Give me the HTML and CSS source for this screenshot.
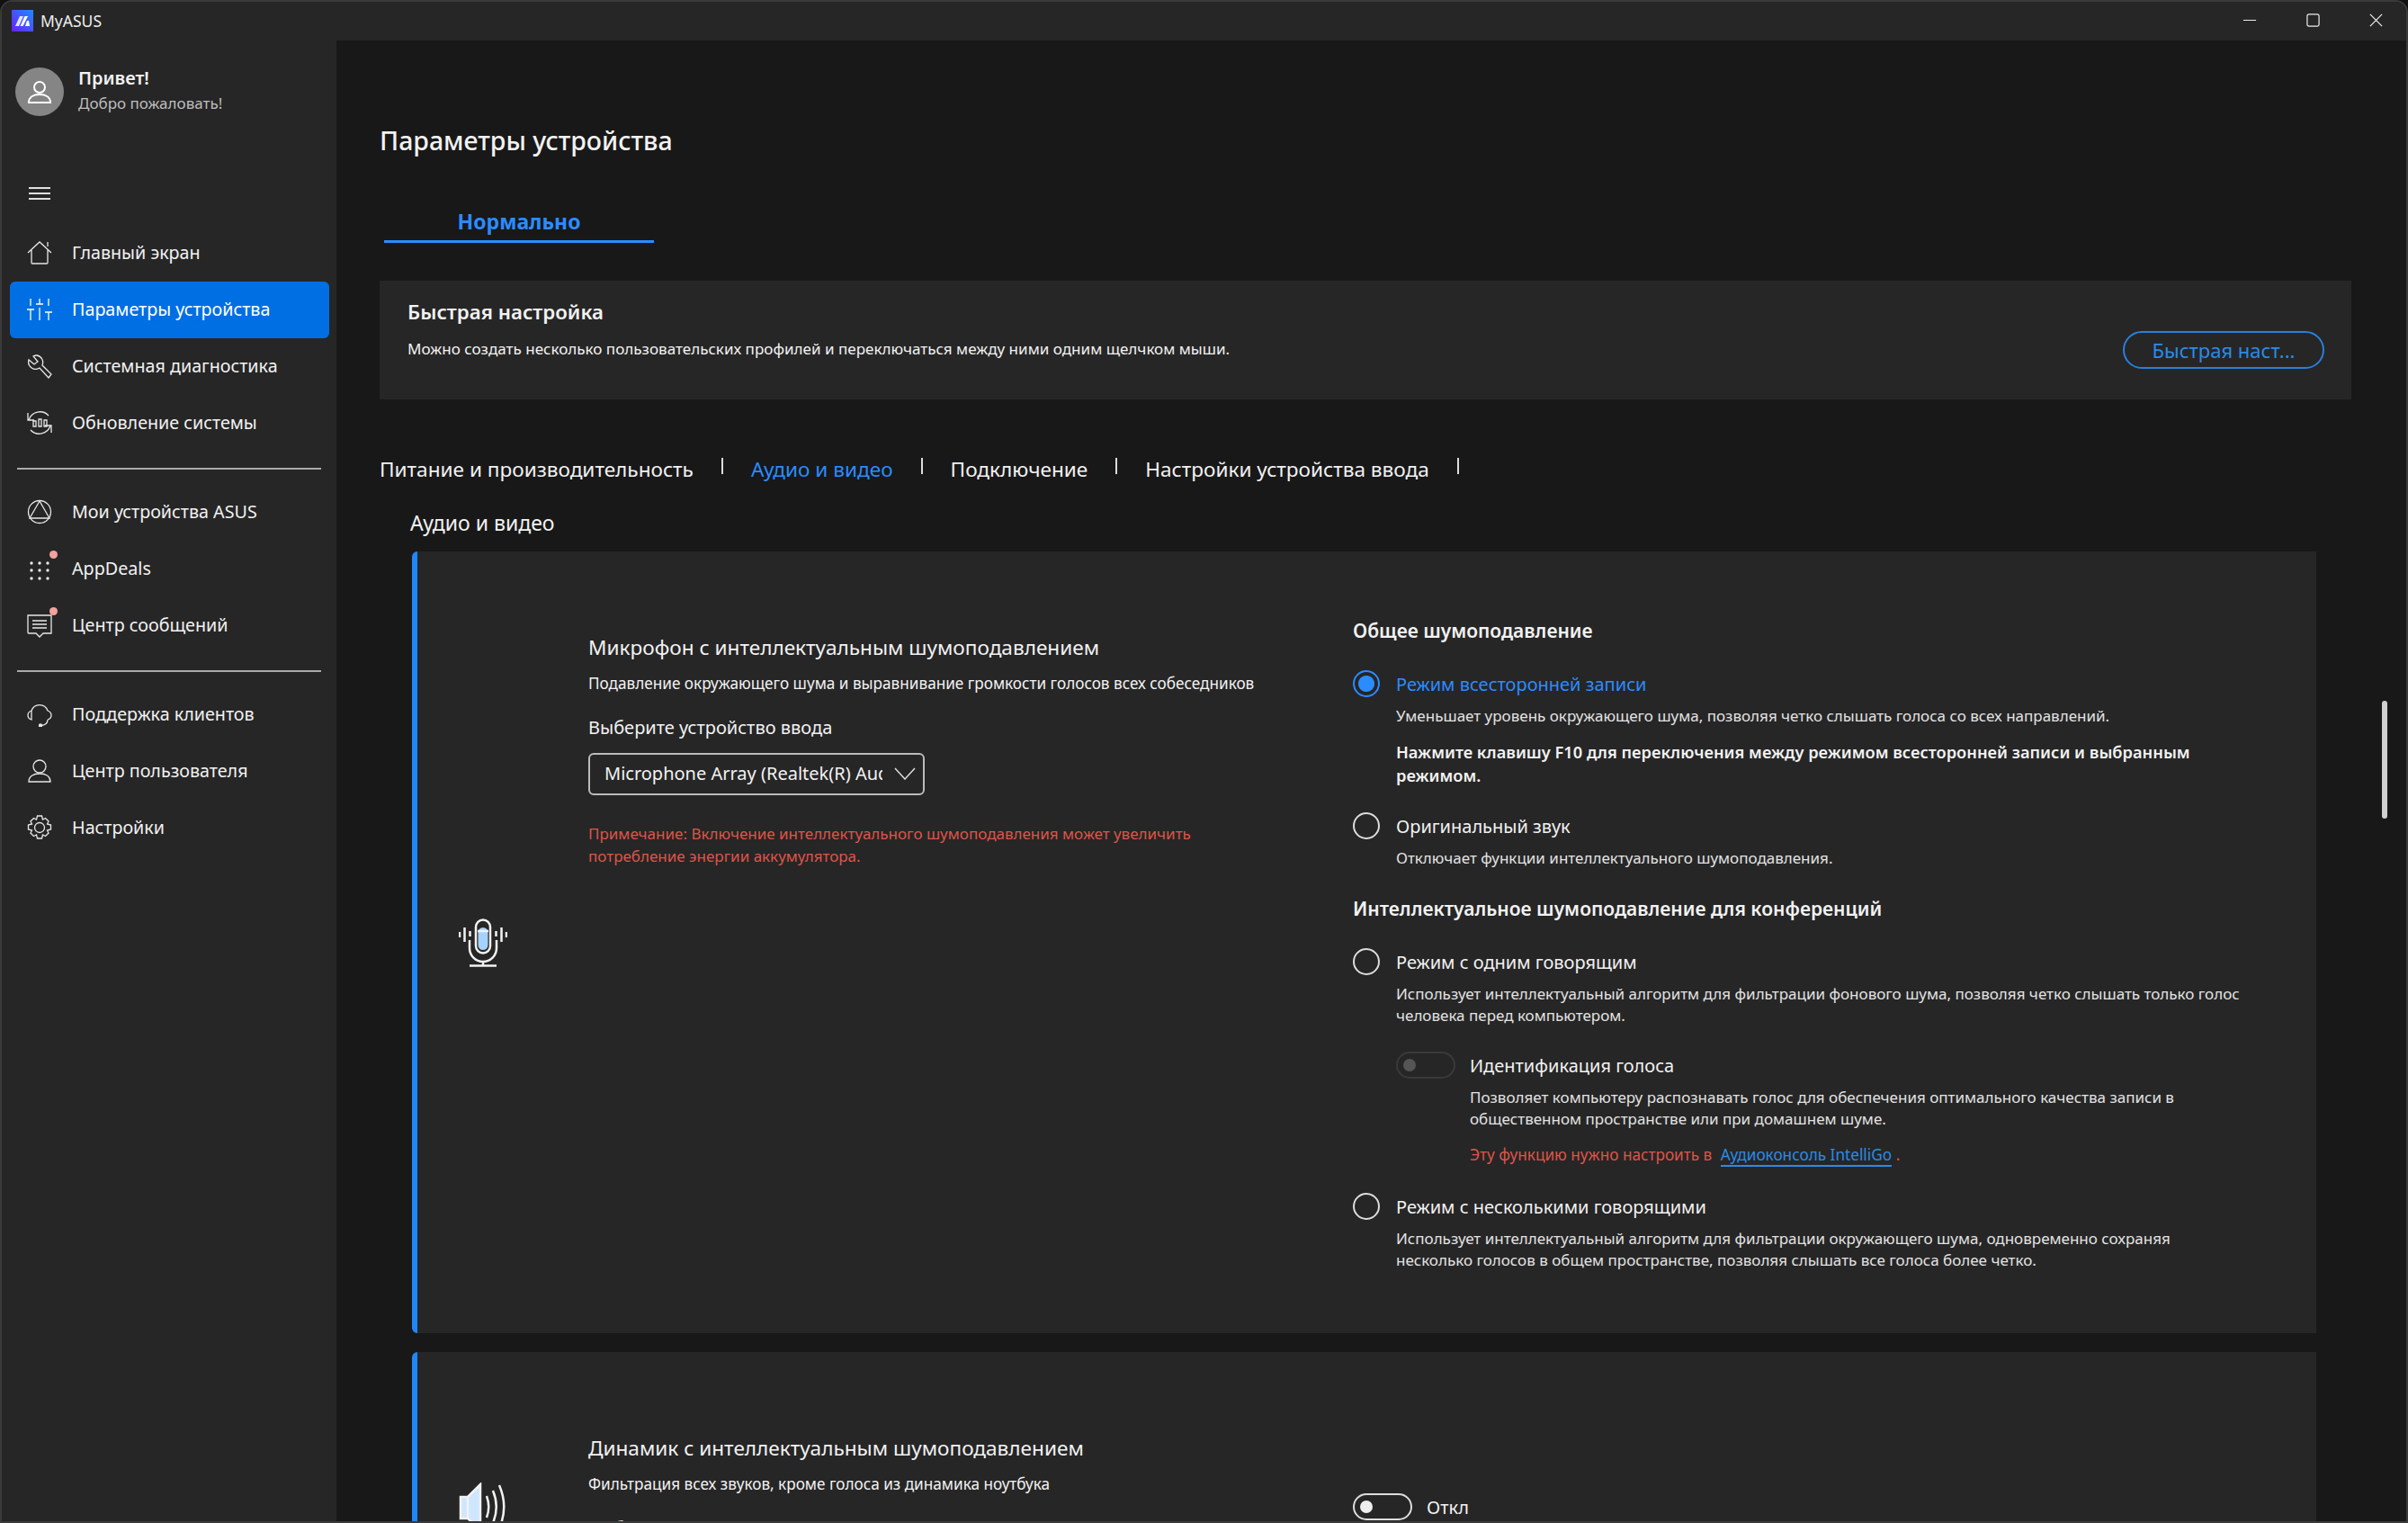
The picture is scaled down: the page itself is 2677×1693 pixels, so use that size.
FILE: index.html
```html
<!DOCTYPE html>
<html lang="ru">
<head>
  <meta charset="UTF-8" />
  <meta name="viewport" content="width=device-width, initial-scale=1" />
  <title>MyASUS</title>
  <link rel="stylesheet" href="styles.css">
</head>
<body>
<div class="ventana">

  <!-- Barra de titulo -->
  <header class="titlebar">
    <svg class="logo" viewBox="0 0 24 24">
      <defs>
        <linearGradient id="logoGrad" x1="0" y1="1" x2="1" y2="0">
          <stop offset="0" stop-color="#6a1fff" />
          <stop offset="1" stop-color="#1e8cff" />
        </linearGradient>
      </defs>
      <rect width="24" height="24" fill="url(#logoGrad)" />
      <polygon points="4,18 8,18 13,7 9,7" fill="#dfe6ff" />
      <polygon points="9.5,18 12.5,18 18,7 14.5,7" fill="#fff" />
      <polygon points="17,12 19,12 20,18 15,18" fill="#fff" />
    </svg>
    <span class="app-name">MyASUS</span>
    <div class="win-btns">
      <svg viewBox="0 0 16 16"><path d="M0 8H15" /></svg>
      <svg viewBox="0 0 16 16"><rect x="1" y="1" width="14" height="14" rx="2" /></svg>
      <svg viewBox="0 0 16 16"><path d="M1 1L15 15M15 1L1 15" /></svg>
    </div>
  </header>

  <div class="cuerpo">

    <!-- Columna izquierda -->
    <aside class="sidebar">
      <div class="perfil">
        <div class="avatar">
          <svg viewBox="0 0 28 28"><circle cx="14" cy="9" r="6" /><path d="M2 26c0-6 5-9 12-9s12 3 12 9z" /></svg>
        </div>
        <div class="saludo">
          <div class="hola">Привет!</div>
          <div class="bienvenida">Добро пожаловать!</div>
        </div>
      </div>

      <div class="hamburguesa"><span></span><span></span><span></span></div>

      <nav>
        <a class="item">
          <svg viewBox="0 0 28 28"><path d="M1 14L14 2L27 14M5 11V25a1 1 0 0 0 1 1H22a1 1 0 0 0 1-1V11M23 7V2" /></svg>
          <span>Главный экран</span>
        </a>
        <a class="item activo">
          <svg viewBox="0 0 28 28"><path d="M4 2V10M14 2V8M10 8H18M24 2V10M4 14V26M0 14H8M14 12V26M24 17V26M20 17H28" /></svg>
          <span>Параметры устройства</span>
        </a>
        <a class="item">
          <svg viewBox="0 0 28 28"><path d="M11 2a8 8 0 0 1 6 11L27 23L24 27L14 16A8 8 0 0 1 2 7L8 12L12 9L7 3a8 8 0 0 1 4-1z" /></svg>
          <span>Системная диагностика</span>
        </a>
        <a class="item">
          <svg viewBox="0 0 28 28"><path d="M2 11A13 13 0 0 1 24 6M26 17A13 13 0 0 1 4 22M1 3V11H8M27 25V17H20M7 12h3v6H7zM13 10h3v8h-3zM19 11h3v7h-3z" /></svg>
          <span>Обновление системы</span>
        </a>
        <hr>
        <a class="item">
          <svg viewBox="0 0 28 28"><circle cx="14" cy="14" r="12.5" /><path d="M14 2L3 21H25z" /></svg>
          <span>Мои устройства ASUS</span>
        </a>
        <a class="item">
          <svg class="relleno" viewBox="0 0 28 28"><circle cx="5" cy="8" r="1.7" /><circle cx="14" cy="8" r="1.7" /><circle cx="23" cy="8" r="1.7" /><circle cx="5" cy="16" r="1.7" /><circle cx="14" cy="16" r="1.7" /><circle cx="23" cy="16" r="1.7" /><circle cx="5" cy="25" r="1.7" /><circle cx="14" cy="25" r="1.7" /><circle cx="23" cy="25" r="1.7" /></svg>
          <i class="punto"></i>
          <span>AppDeals</span>
        </a>
        <a class="item">
          <svg viewBox="0 0 28 28"><path d="M1 3H27V23H18L14 27L10 23H2a1 1 0 0 1-1-1zM6 9H22M6 13H22M6 17H22" /></svg>
          <i class="punto"></i>
          <span>Центр сообщений</span>
        </a>
        <hr>
        <a class="item">
          <svg viewBox="0 0 28 28"><path d="M5 10a9.500 9.500 0 0 1 18 0M5 10C2 11 1 13 1 15s1 4 4 5zM23 10c3 1 4 3 4 5s-1 4-4 5M23 20c0 4-3 6-7 6.500" /><circle class="lleno" cx="15" cy="26.500" r="1.500" /></svg>
          <span>Поддержка клиентов</span>
        </a>
        <a class="item">
          <svg viewBox="0 0 28 28"><circle cx="14" cy="9" r="7" /><path d="M2 26c0-6 5-9 12-9s12 3 12 9z" /></svg>
          <span>Центр пользователя</span>
        </a>
        <a class="item">
          <svg viewBox="0 0 28 28"><circle cx="14" cy="14" r="5.500" /><path d="M11.500 1h5l1 4 3-1.500 3.500 3.500-1.500 3 4 1v5l-4 1 1.500 3-3.500 3.500-3-1.500-1 4h-5l-1-4-3 1.500-3.500-3.500 1.500-3-4-1v-5l4-1-1.500-3 3.500-3.500 3 1.500z" /></svg>
          <span>Настройки</span>
        </a>
      </nav>
    </aside>

    <!-- Contenido -->
    <main class="contenido">
      <h1>Параметры устройства</h1>

      <div class="modo">Нормально</div>

      <section class="rapida">
        <div>
          <h3>Быстрая настройка</h3>
          <p>Можно создать несколько пользовательских профилей и переключаться между ними одним щелчком мыши.</p>
        </div>
        <button class="btn-rapida">Быстрая наст...</button>
      </section>

      <div class="categorias">
        <span>Питание и производительность</span><b></b>
        <span class="sel">Аудио и видео</span><b></b>
        <span>Подключение</span><b></b>
        <span>Настройки устройства ввода</span><b></b>
      </div>

      <h2>Аудио и видео</h2>

      <section class="tarjeta">
        <div class="col-icono">
          <svg viewBox="0 0 54 54">
            <rect x="21.500" y="10" width="11" height="25" rx="5.500" fill="#a6d2ff" stroke="none" />
            <rect x="19" y="1.500" width="16" height="37" rx="8" />
            <path d="M21 14H33M12 24V33a15 15 0 0 0 30 0V24M27 48V52M12 52.500H42M1 15V21M6.500 10V26M12.500 14V20M41.500 14V20M47.500 10V26M53 15V21" />
          </svg>
        </div>
        <div class="col-izq">
          <h4>Микрофон с интеллектуальным шумоподавлением</h4>
          <p class="sub">Подавление окружающего шума и выравнивание громкости голосов всех собеседников</p>
          <div class="etiqueta">Выберите устройство ввода</div>
          <div class="select">
            <span>Microphone Array (Realtek(R) Audio)</span>
            <svg viewBox="0 0 24 14"><path d="M1 1L12 13L23 1" /></svg>
          </div>
          <p class="nota">Примечание: Включение интеллектуального шумоподавления может увеличить<br>потребление энергии аккумулятора.</p>
        </div>
        <div class="col-der">
          <h5>Общее шумоподавление</h5>
          <div class="opcion sel m29"><i class="radio marcado"></i>Режим всесторонней записи</div>
          <p class="desc">Уменьшает уровень окружающего шума, позволяя четко слышать голоса со всех направлений.</p>
          <p class="aviso">Нажмите клавишу F10 для переключения между режимом всесторонней записи и выбранным<br>режимом.</p>
          <div class="opcion m28"><i class="radio"></i>Оригинальный звук</div>
          <p class="desc">Отключает функции интеллектуального шумоподавления.</p>
          <h5 class="m29">Интеллектуальное шумоподавление для конференций</h5>
          <div class="opcion m29"><i class="radio"></i>Режим с одним говорящим</div>
          <p class="desc">Использует интеллектуальный алгоритм для фильтрации фонового шума, позволяя четко слышать только голос<br>человека перед компьютером.</p>
          <div class="voz">
            <div class="opcion-voz"><i class="toggle off"></i>Идентификация голоса</div>
            <p class="desc">Позволяет компьютеру распознавать голос для обеспечения оптимального качества записи в<br>общественном пространстве или при домашнем шуме.</p>
            <p class="aviso-rojo">Эту функцию нужно настроить в <a>Аудиоконсоль IntelliGo</a> <em>.</em></p>
          </div>
          <div class="opcion m30"><i class="radio"></i>Режим с несколькими говорящими</div>
          <p class="desc">Использует интеллектуальный алгоритм для фильтрации окружающего шума, одновременно сохраняя<br>несколько голосов в общем пространстве, позволяя слышать все голоса более четко.</p>
        </div>
      </section>

      <section class="tarjeta segunda">
        <div class="col-icono">
          <svg viewBox="0 0 54 54">
            <path d="M24 2V52L10 40H2V16H10z" fill="#cfe6ff" stroke="none" />
            <path d="M24 2V52L10 40H2V16H10zM10 16V40M31 15c3 8 3 16 0 24M38 9c5 12 5 24 0 36M45 3c7 16 7 32 0 48" />
          </svg>
        </div>
        <div class="col-izq">
          <h4>Динамик с интеллектуальным шумоподавлением</h4>
          <p class="sub">Фильтрация всех звуков, кроме голоса из динамика ноутбука</p>
          <div class="etiqueta">Выберите устройство вывода</div>
        </div>
        <div class="col-der abajo">
          <div class="opcion"><i class="toggle"></i>Откл</div>
        </div>
      </section>
    </main>

    <div class="scroll"></div>
  </div>
</div>
</body>
</html>
```

FILE: styles.css
```css
* {
  box-sizing: border-box;
}

html, body {
  margin: 0;
  height: 100%;
  background: #111;
  overflow: hidden;
}

body {
  font-family: "Noto Sans", "Open Sans", sans-serif;
  color: #f2f2f2;
}

h1, h2, h3, h4, h5, p {
  margin: 0;
  font-weight: 400;
}

.ventana {
  height: 100vh;
  display: flex;
  flex-direction: column;
  border-radius: 14px 14px 0 0;
  border: 2px solid #3a3a3a;
  overflow: hidden;
}

/* Barra de titulo */
.titlebar {
  flex: 0 0 43px;
  display: flex;
  align-items: center;
  background: #262626;
  padding: 0 0 2px 11px;
}

.logo {
  width: 24px;
  height: 24px;
}

.app-name {
  margin-left: 8px;
  font-size: 17.500px;
  color: #eee;
}

.win-btns {
  margin-left: auto;
  display: flex;
  gap: 55px;
  padding-right: 26px;
}

.win-btns svg {
  width: 15px;
  height: 15px;
  fill: none;
  stroke: #eee;
  stroke-width: 1.3;
}

.cuerpo {
  flex: 1;
  display: flex;
  position: relative;
  min-height: 0;
}

/* Columna izquierda */
.sidebar {
  flex: 0 0 372px;
  background: #262626;
  padding-top: 30px;
}

.perfil {
  display: flex;
  align-items: center;
  gap: 16px;
  padding-left: 15px;
  height: 54px;
}

.avatar {
  width: 54px;
  height: 54px;
  border-radius: 50%;
  background: #858585;
  display: flex;
  align-items: center;
  justify-content: center;
}

.avatar svg {
  width: 28px;
  height: 28px;
  fill: none;
  stroke: #fff;
  stroke-width: 2;
}

.saludo {
  padding-bottom: 2px;
}

.hola {
  font-size: 20px;
  font-weight: 600;
  line-height: 28px;
}

.bienvenida {
  font-size: 17px;
  line-height: 28px;
  color: #bdbdbd;
}

.hamburguesa {
  margin: 79px 0 28px 30px;
  width: 24px;
  display: flex;
  flex-direction: column;
  gap: 4px;
}

.hamburguesa span {
  height: 2px;
  background: #e0e0e0;
}

.item {
  height: 63px;
  margin: 0 8px 0 9px;
  padding: 0 0 2px 19px;
  display: flex;
  align-items: center;
  position: relative;
  border-radius: 6px;
  font-size: 19.700px;
  color: #f2f2f2;
}

.item svg {
  width: 28px;
  height: 28px;
  flex: none;
  fill: none;
  stroke: #e8e8e8;
  stroke-width: 1.3;
}

.item svg.relleno {
  fill: #e8e8e8;
  stroke: none;
}

.item svg .lleno {
  fill: #e8e8e8;
}

.item span {
  margin-left: 22px;
}

.item.activo {
  background: #006fe3;
  color: #fff;
}

.item.activo svg {
  stroke: #fff;
}

.punto {
  position: absolute;
  left: 44px;
  top: 11px;
  width: 9px;
  height: 9px;
  border-radius: 50%;
  background: #f2a39d;
}

nav hr {
  height: 2px;
  margin: 18px 17px 16px 17px;
  border: 0;
  background: #aaa;
}

/* Contenido */
.contenido {
  flex: 1;
  min-width: 0;
  background: #181818;
  padding: 91px 61px 0 48px;
  overflow: hidden;
}

h1 {
  font-size: 28.500px;
  font-weight: 500;
  line-height: 40px;
}

.modo {
  width: 300px;
  margin: 50px 0 0 5px;
  height: 44px;
  line-height: 40px;
  text-align: center;
  font-size: 23px;
  font-weight: 700;
  color: #2b8cff;
  border-bottom: 3px solid #2b8cff;
}

.rapida {
  margin-top: 42px;
  height: 132px;
  background: #262626;
  padding: 20px 30px 34px 31px;
  display: flex;
  justify-content: space-between;
  align-items: flex-end;
}

.rapida > div {
  align-self: flex-start;
}

.rapida h3 {
  font-size: 22.300px;
  font-weight: 600;
  line-height: 30px;
}

.rapida p {
  margin-top: 14px;
  font-size: 17.060px;
  line-height: 24px;
}

.btn-rapida {
  width: 224px;
  height: 42px;
  background: none;
  border: 2px solid #2a7fdc;
  border-radius: 21px;
  color: #2b8be8;
  font-family: inherit;
  font-size: 22px;
  padding: 0;
}

.categorias {
  margin-top: 62px;
  display: flex;
  align-items: center;
  gap: 31px;
  line-height: 32px;
  font-size: 22.600px;
}

.categorias b {
  width: 2px;
  height: 18px;
  margin-top: -8px;
  background: #ddd;
}

.sel {
  color: #2b8cff;
}

h2 {
  margin: 27px 0 0 34px;
  font-size: 23px;
  line-height: 32px;
}

.tarjeta {
  margin: 16px 39px 0 36px;
  height: 869px;
  background: #262626;
  border-left: 6px solid #1f86fb;
  border-radius: 6px 0 0 6px;
  display: flex;
}

.tarjeta.segunda {
  margin-top: 21px;
  height: 344px;
}

.col-icono {
  flex: 0 0 190px;
  display: flex;
  align-items: center;
  padding-left: 46px;
}

.col-icono svg {
  width: 54px;
  height: 54px;
  fill: none;
  stroke: #f2f2f2;
  stroke-width: 2.500;
}

.col-izq {
  flex: 0 0 850px;
  padding-top: 92px;
}

.col-izq h4 {
  font-size: 22.600px;
  line-height: 30px;
}

.sub {
  margin-top: 13px;
  font-size: 17.170px;
  line-height: 24px;
}

.etiqueta {
  margin-top: 23px;
  font-size: 20px;
  line-height: 28px;
}

.select {
  margin-top: 14px;
  width: 374px;
  height: 47px;
  border: 2px solid #bbb;
  border-radius: 6px;
  padding: 0 8px 2px 16px;
  display: flex;
  align-items: center;
  justify-content: space-between;
  font-size: 20px;
}

.select span {
  width: 309px;
  overflow: hidden;
  white-space: nowrap;
}

.select svg {
  width: 24px;
  height: 14px;
  fill: none;
  stroke: #ddd;
  stroke-width: 1.5;
}

.nota {
  margin-top: 30px;
  font-size: 17px;
  line-height: 25px;
  color: #de5548;
}

.col-der {
  flex: 1;
  padding-top: 73px;
}

.col-der.abajo {
  padding-top: 157px;
}

h5 {
  font-size: 21px;
  font-weight: 600;
  line-height: 30px;
}

.m28 { margin-top: 28px; }
.m29 { margin-top: 29px; }
.m30 { margin-top: 30px; }

.opcion,
.opcion-voz {
  display: flex;
  align-items: center;
  height: 30px;
  font-size: 20px;
}

.radio {
  width: 30px;
  height: 30px;
  margin-right: 18px;
  border: 2px solid #ddd;
  border-radius: 50%;
  flex: none;
}

.radio.marcado {
  border-color: #2b8cff;
  background: radial-gradient(circle, #2b8cff 8.500px, transparent 9.500px);
}

.desc {
  margin: 9px 0 0 48px;
  font-size: 17px;
  line-height: 24px;
  color: #e2e2e2;
}

.aviso {
  margin: 15px 0 0 48px;
  font-size: 18.250px;
  font-weight: 600;
  line-height: 26px;
}

.voz {
  margin: 28px 0 0 48px;
}

.voz .desc {
  margin-left: 82px;
}

.toggle {
  width: 66px;
  height: 30px;
  margin-right: 16px;
  border: 2px solid #ddd;
  border-radius: 15px;
  flex: none;
  position: relative;
}

.toggle::after {
  content: "";
  position: absolute;
  left: 6px;
  top: 6px;
  width: 14px;
  height: 14px;
  border-radius: 50%;
  background: #eee;
}

.toggle.off {
  border-color: #3a3a3a;
}

.toggle.off::after {
  background: #555;
}

.aviso-rojo {
  margin: 16px 0 0 82px;
  font-size: 17.200px;
  line-height: 24px;
  color: #de5548;
}

.aviso-rojo a {
  margin-left: 5px;
  color: #2b8be8;
  border-bottom: 2px solid #2b8be8;
}

.aviso-rojo em {
  font-style: normal;
}

.scroll {
  position: absolute;
  right: 21px;
  top: 734px;
  width: 6px;
  height: 131px;
  border-radius: 3px;
  background: #d0d0d0;
}
```
